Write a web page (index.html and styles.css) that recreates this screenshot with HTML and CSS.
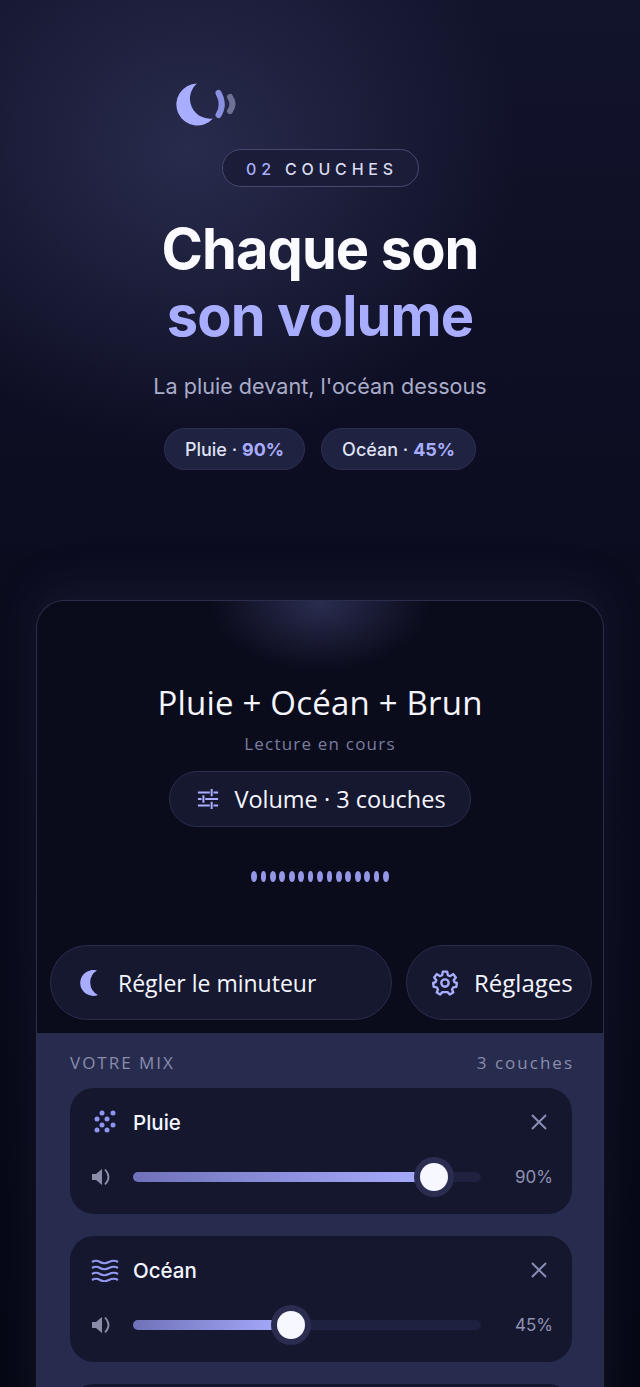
FILE: index.html
```html
<!DOCTYPE html>
<html lang="fr">
<head>
    <meta charset="UTF-8">
    <meta name="viewport" content="width=device-width, initial-scale=1.0">
    <title>Mix sommeil</title>
    <link rel="stylesheet" href="styles.css">
</head>
<body>
    <div class="page">
        <div class="hero">
            <svg class="logo" width="64" height="44" viewBox="0 0 64 44">
                <path d="M22 1.500A21 21 0 1 0 38 36.500A20 20 0 0 1 22 1.500Z" fill="#a9adff"/>
                <path d="M43.500 11Q50 23 43.500 33" fill="none" stroke="#8a90e0" stroke-width="6" stroke-linecap="round"/>
                <path d="M55 15Q60 22 55 29" fill="none" stroke="#6f7294" stroke-width="6" stroke-linecap="round"/>
            </svg>
            <div class="badge"><span class="badgeNum">02</span> COUCHES</div>
            <h1 class="heroTitle">Chaque son<br><span class="accent">son volume</span></h1>
            <p class="heroSub">La pluie devant, l'océan dessous</p>
            <div class="chips">
                <div class="chip">Pluie · <b>90%</b></div>
                <div class="chip">Océan · <b>45%</b></div>
            </div>
        </div>

        <div class="card">
            <div class="player">
                <div class="trackName">Pluie + Océan + Brun</div>
                <div class="trackState">Lecture en cours</div>
                <div class="volumeBtn">
                    <svg width="22" height="22" viewBox="0 0 24 24" fill="none" stroke="#a9adff" stroke-width="2.200">
                        <path d="M1 5H14M18 5H23M16 1V9M1 12H5M9 12H23M7 8V16M1 19H14M18 19H23M16 15V23"/>
                    </svg>
                    Volume · 3 couches
                </div>
                <div class="dots">
                    <i></i><i></i><i></i><i></i><i></i><i></i><i></i><i></i><i></i><i></i><i></i><i></i><i></i><i></i><i></i>
                </div>
                <div class="actions">
                    <div class="actionBtn timerBtn">
                        <svg width="22" height="26" viewBox="0 0 22 26">
                            <path d="M17 0.500A13 13 0 1 0 18 25A14 14 0 0 1 17 0.500Z" fill="#a9adff"/>
                        </svg>
                        Régler le minuteur
                    </div>
                    <div class="actionBtn settingsBtn">
                        <svg width="26" height="26" viewBox="0 0 24 24" fill="none" stroke="#a9adff" stroke-width="2.200" stroke-linejoin="round">
                            <circle cx="12" cy="12" r="3.400"/>
                            <path d="M10 1.500H14L14.600 4.700L16.800 5.600L19.500 3.800L22 6.900L20 9.400L20.700 11.200L23 12L22.400 15.600L19.600 16L18.500 18L19.600 20.800L16.400 22.600L14.400 20.400H9.600L7.600 22.600L4.400 20.800L5.500 18L4.400 16L1.600 15.600L1 12L3.300 11.200L4 9.400L2 6.900L4.500 3.800L7.200 5.600L9.400 4.700Z"/>
                        </svg>
                        Réglages
                    </div>
                </div>
            </div>

            <div class="mix">
                <div class="mixHead">
                    <span class="mixTitle">VOTRE MIX</span>
                    <span class="mixCount">3 couches</span>
                </div>

                <div class="layer">
                    <div class="layerTop">
                        <svg class="layerIcon" width="28" height="24" viewBox="0 0 28 24" fill="#8f94f0">
                            <circle cx="11" cy="3" r="2.500"/><circle cx="22" cy="3" r="2.500"/>
                            <circle cx="6" cy="9" r="2.500"/><circle cx="16" cy="9" r="2.500"/>
                            <circle cx="11" cy="15" r="2.500"/><circle cx="22" cy="15" r="2.500"/>
                            <circle cx="6" cy="20" r="2.500"/><circle cx="16" cy="20" r="2.500"/>
                        </svg>
                        <span class="layerName">Pluie</span>
                        <svg class="closeIcon" width="16" height="16" viewBox="0 0 16 16" stroke="#8a8db5" stroke-width="2">
                            <path d="M1 1L15 15M15 1L1 15"/>
                        </svg>
                    </div>
                    <div class="layerBottom">
                        <svg class="speaker" width="20" height="20" viewBox="0 0 20 20">
                            <path d="M1 7H5L11 2V18L5 13H1Z" fill="#8a8da8"/>
                            <path d="M14 2.500Q21 10 14 17.500" fill="none" stroke="#8a8da8" stroke-width="1.800"/>
                        </svg>
                        <div class="track">
                            <div class="fill" style="width: 301px"><span class="thumb"></span></div>
                        </div>
                        <span class="pct">90%</span>
                    </div>
                </div>

                <div class="layer">
                    <div class="layerTop">
                        <svg class="layerIcon" width="28" height="24" viewBox="0 0 28 24" fill="none" stroke="#9297f0" stroke-width="2.200">
                            <path d="M1 4Q5 1.500 9 4T18 4T27 4"/>
                            <path d="M1 10Q5 7.500 9 10T18 10T27 10"/>
                            <path d="M1 16Q5 13.500 9 16T18 16T27 16"/>
                            <path d="M1 22Q5 19.500 9 22T18 22T27 22"/>
                        </svg>
                        <span class="layerName">Océan</span>
                        <svg class="closeIcon" width="16" height="16" viewBox="0 0 16 16" stroke="#8a8db5" stroke-width="2">
                            <path d="M1 1L15 15M15 1L1 15"/>
                        </svg>
                    </div>
                    <div class="layerBottom">
                        <svg class="speaker" width="20" height="20" viewBox="0 0 20 20">
                            <path d="M1 7H5L11 2V18L5 13H1Z" fill="#8a8da8"/>
                            <path d="M14 2.500Q21 10 14 17.500" fill="none" stroke="#8a8da8" stroke-width="1.800"/>
                        </svg>
                        <div class="track">
                            <div class="fill" style="width: 158px"><span class="thumb"></span></div>
                        </div>
                        <span class="pct">45%</span>
                    </div>
                </div>

                <div class="layer"></div>
            </div>
        </div>
    </div>
</body>
</html>
```

FILE: styles.css
```css
html, body {
    margin: 0;
    background: #070815;
}

.page {
    height: 1387px;
    overflow: hidden;
    font-family: "Inter", "Noto Sans", sans-serif;
    color: #f5f6ff;
    background:
        radial-gradient(ellipse 330px 300px at 190px 150px, #282b4c 0%, rgba(40, 43, 76, 0.5) 50%, rgba(40, 43, 76, 0) 100%),
        linear-gradient(180deg, #12142c 0%, #0d0e23 30%, #0b0c1e 42%, #070815 100%);
}

/* top part */
.hero {
    display: flex;
    flex-direction: column;
    align-items: center;
    padding-top: 82px;
    height: 518px;
}
.logo {
    display: block;
    align-self: flex-start;
    margin-left: 175px;
}
.badge {
    margin-top: 23px;
    width: 197px;
    height: 38px;
    box-sizing: border-box;
    padding-left: 4px;
    border: 1px solid #45496f;
    border-radius: 19px;
    background: #1a1c38;
    text-align: center;
    line-height: 38px;
    font-size: 16px;
    font-weight: 500;
    letter-spacing: 4.800px;
    color: #d8daf0;
}
.badgeNum {
    color: #a9adff;
}
.heroTitle {
    margin: 29px 0 0;
    text-align: center;
    font-size: 56px;
    line-height: 67px;
    font-weight: 700;
    letter-spacing: -0.900px;
    color: #fbfbff;
}
.accent {
    color: #a9adff;
}
.heroSub {
    margin: 21px 0 0;
    font-size: 21.600px;
    line-height: 30px;
    color: #a9acc8;
}
.chips {
    display: flex;
    gap: 16px;
    margin-top: 27px;
}
.chip {
    height: 42px;
    box-sizing: border-box;
    padding: 0 20px;
    border: 1px solid #2c2f53;
    border-radius: 21px;
    background: #1f2240;
    line-height: 41px;
    font-size: 18px;
    font-weight: 500;
    color: #dfe1f5;
}
.chip b {
    font-weight: 700;
    color: #a9adff;
}

/* player card */
.card {
    margin: 0 36px;
    border: 1px solid #2a2d4c;
    border-bottom: none;
    border-radius: 28px 28px 0 0;
    background: #0a0b1b;
    box-shadow: 0 -14px 40px rgba(42, 45, 80, 0.3);
}
.player {
    padding-top: 81px;
    height: 351px;
    display: flex;
    flex-direction: column;
    align-items: center;
    background: radial-gradient(ellipse 110px 70px at 50% 0, #2a2d50 0%, rgba(42, 45, 80, 0) 100%);
    border-radius: 28px 28px 0 0;
}
.trackName {
    font-family: "Open Sans", sans-serif;
    font-size: 33px;
    letter-spacing: 0.200px;
    line-height: 42px;
    color: #f5f6ff;
}
.trackState {
    margin-top: 9px;
    font-family: "Open Sans", sans-serif;
    font-size: 17px;
    line-height: 22px;
    letter-spacing: 1.200px;
    color: #7a7da0;
}
.volumeBtn {
    display: flex;
    align-items: center;
    gap: 15px;
    margin-top: 16px;
    height: 56px;
    box-sizing: border-box;
    padding: 0 24px 0 27px;
    border: 1px solid #2a2d4c;
    border-radius: 28px;
    background: #15182f;
    font-family: "Open Sans", sans-serif;
    font-size: 23.500px;
    color: #f5f6ff;
}
.dots {
    display: flex;
    gap: 3.640px;
    margin-top: 44px;
}
.dots i {
    display: block;
    width: 5.800px;
    height: 11px;
    border-radius: 50%;
    background: #9397e6;
}
.actions {
    display: flex;
    gap: 14px;
    align-self: stretch;
    margin: 63px 11px 0 13px;
}
.actionBtn {
    display: flex;
    align-items: center;
    height: 75px;
    box-sizing: border-box;
    border: 1px solid #2a2d4c;
    border-radius: 38px;
    background: #15182f;
    font-family: "Open Sans", sans-serif;
    color: #f5f6ff;
}
.timerBtn {
    flex: 1;
    gap: 16px;
    padding-left: 29px;
    font-size: 23px;
}
.settingsBtn {
    width: 186px;
    gap: 16px;
    padding-left: 25px;
    font-size: 24px;
}

/* layers */
.mix {
    background: #272c4f;
    padding: 17px 31px 0 33px;
    font-family: "Open Sans", sans-serif;
}
.mixHead {
    display: flex;
    justify-content: space-between;
    height: 38px;
    line-height: 26px;
    font-size: 17px;
    letter-spacing: 2px;
    color: #8a8dab;
}
.mixCount {
    margin-right: -2px;
}
.layer {
    height: 125.600px;
    box-sizing: border-box;
    margin-bottom: 22.600px;
    padding: 20px 19px 0 21px;
    border-radius: 24px;
    background: #14172e;
}
.layerTop {
    display: flex;
    align-items: center;
    height: 28px;
}
.layerIcon {
    flex: none;
}
.layerName {
    margin-left: 14px;
    font-size: 20.500px;
    font-family: "Inter", sans-serif;
    font-weight: 500;
    color: #f5f6ff;
}
.closeIcon {
    margin-left: auto;
    margin-right: 6px;
}
.layerBottom {
    display: flex;
    align-items: center;
    margin-top: 27px;
    height: 28px;
}
.speaker {
    flex: none;
}
.track {
    width: 348px;
    height: 10px;
    margin-left: 22px;
    border-radius: 5px;
    background: #1e2140;
}
.fill {
    position: relative;
    height: 10px;
    border-radius: 5px;
    background: linear-gradient(90deg, #6f72b8, #a9adff);
}
.thumb {
    position: absolute;
    right: -14px;
    top: -9px;
    width: 28px;
    height: 28px;
    border-radius: 50%;
    background: #f7f7ff;
    box-shadow: 0 0 0 6px #2a2d50;
}
.pct {
    margin-left: auto;
    font-family: "Inter", sans-serif;
    font-size: 17px;
    color: #8f92b2;
}
```
